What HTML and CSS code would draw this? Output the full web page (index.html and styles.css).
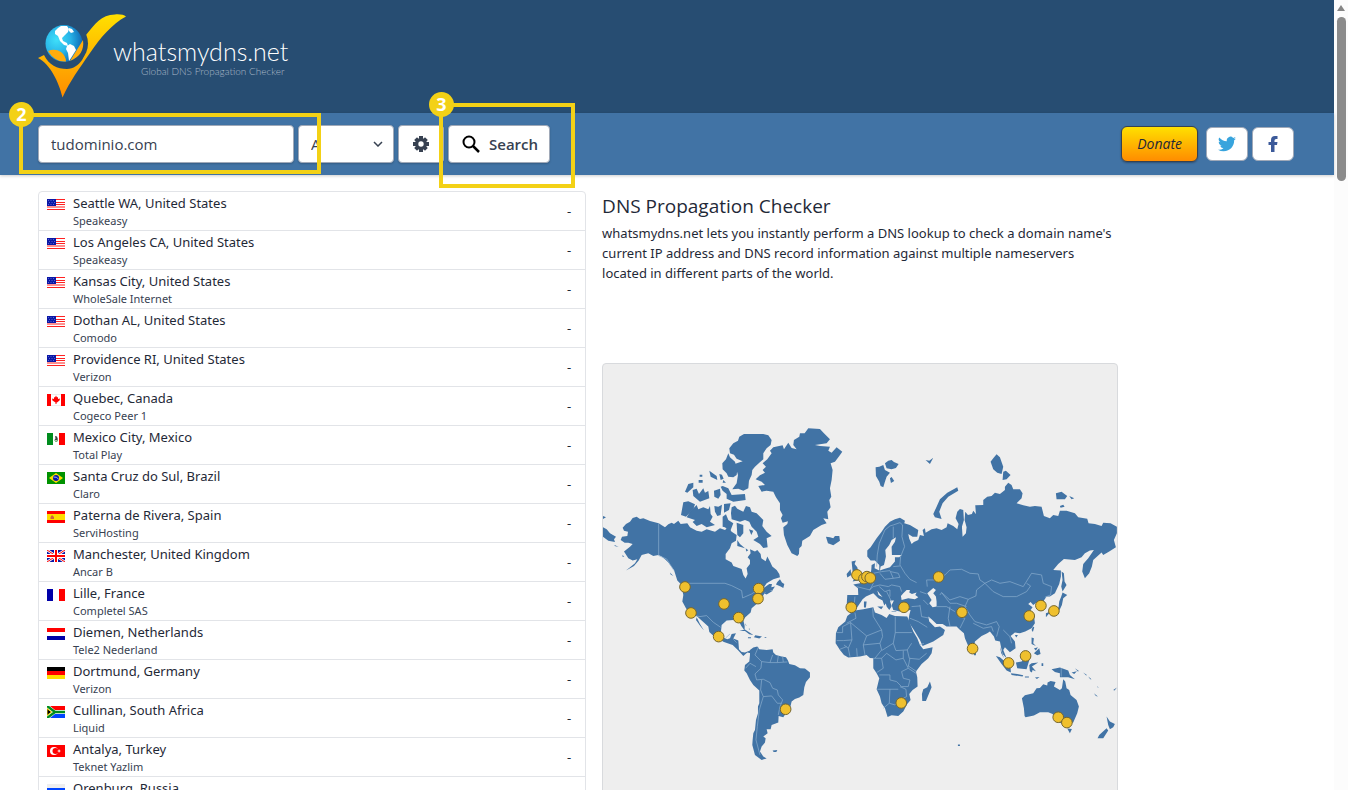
FILE: index.html
```html
<!DOCTYPE html>
<html lang="en">
<head>
    <meta charset="UTF-8">
    <meta name="viewport" content="width=device-width, initial-scale=1.0">
    <title>DNS Propagation Checker - whatsmydns.net</title>
    <link rel="stylesheet" href="styles.css">
</head>
<body>
    <!-- Flags -->
    <svg class="sprite" aria-hidden="true">
        <symbol id="us" viewBox="0 0 18 12">
            <path fill="#fff" d="M0 0h18v12H0z"/>
            <path stroke="#f22" d="M0 .5h18M0 3.5h18M0 5.5h18M0 8h18M0 10.5h18"/>
            <path fill="#0a17a7" d="M0 0h9v7H0z"/>
            <path stroke="#5562cc" stroke-dasharray="1 1.5" d="M1 1.5h7M2 3.5h6M1 5.5h7"/>
        </symbol>
        <symbol id="ca" viewBox="0 0 18 12">
            <path fill="#eee" d="M0 0h18v12H0z"/><path fill="#fff" d="M4 1h10v10H4z"/>
            <path fill="#f00" d="M0 0h4v12H0zM14 0h4v12h-4zM9 1.500l1 2 1-.5v2l2-.5-.5 2L10 8.500H9.500V10h-1V8.500L5.500 6.500 5 4.500l2 .5V3l1 .5z"/>
        </symbol>
        <symbol id="mx" viewBox="0 0 18 12">
            <path fill="#fff" d="M0 0h18v12H0z"/><path fill="#008c1e" d="M0 0h6v12H0z"/><path fill="#f00" d="M12 0h6v12h-6z"/>
            <path fill="#444" d="M8 3l2 .5 1 3-2 1-1.500-1 1-1z"/><path stroke="#4c9a4c" d="M7.500 7.500l1.500 1 2-1" fill="none"/>
        </symbol>
        <symbol id="br" viewBox="0 0 18 12">
            <path fill="#009200" d="M0 0h18v12H0z"/><path fill="#fd0" d="M9 1l7 5-7 5-7-5z"/>
            <circle cx="9" cy="6" r="3" fill="#0a17a7"/><path stroke="#9fb4ff" fill="none" d="M6.500 5q3-.5 5 2"/>
        </symbol>
        <symbol id="es" viewBox="0 0 18 12">
            <path fill="#f00" d="M0 0h18v12H0z"/><path fill="#fd0" d="M0 3h18v6H0z"/>
            <path fill="#d06040" d="M3.500 8V6l1.500-2 2 2v2z"/>
        </symbol>
        <symbol id="gb" viewBox="0 0 18 12">
            <path fill="#0a17a7" d="M0 0h18v12H0z"/>
            <path stroke="#fff" stroke-width="2.500" d="M0 0l18 12M18 0L0 12"/>
            <path stroke="#f00" d="M0 0l18 12M18 0L0 12"/>
            <path stroke="#fff" stroke-width="4" d="M9 0v12M0 6h18"/>
            <path stroke="#f00" stroke-width="2" d="M9 0v12M0 6h18"/>
        </symbol>
        <symbol id="fr" viewBox="0 0 18 12">
            <path fill="#fff" d="M0 0h18v12H0z"/><path fill="#0000a8" d="M0 0h6v12H0z"/><path fill="#f00" d="M12 0h6v12h-6z"/>
        </symbol>
        <symbol id="nl" viewBox="0 0 18 12">
            <path fill="#fff" d="M0 0h18v12H0z"/><path fill="#f00" d="M0 0h18v4H0z"/><path fill="#0000a8" d="M0 8h18v4H0z"/>
        </symbol>
        <symbol id="de" viewBox="0 0 18 12">
            <path d="M0 0h18v4H0z"/><path fill="#f00" d="M0 4h18v4H0z"/><path fill="#fd0" d="M0 8h18v4H0z"/>
        </symbol>
        <symbol id="za" viewBox="0 0 18 12">
            <path fill="#fff" d="M0 0h18v12H0z"/><path fill="#f00" d="M3 0h15v4H8z"/><path fill="#04f" d="M3 12h15V8H8z"/>
            <path stroke="#008c1e" stroke-width="2.500" fill="none" d="M0 0l8 6-8 6M8 6h10"/>
            <path stroke="#fd0" fill="#000" d="M0 2.500L4.500 6 0 9.500z"/>
        </symbol>
        <symbol id="tr" viewBox="0 0 18 12">
            <path fill="#f00" d="M0 0h18v12H0z"/><circle cx="7" cy="6" r="4" fill="#fff"/><circle cx="8.500" cy="6" r="3" fill="#f00"/>
            <path fill="#fff" d="M10 6l1.500-.5.5-1.500.7 1.500 1.300.5-1.300.5-.7 1.500-.5-1.500z"/>
        </symbol>
        <symbol id="ru" viewBox="0 0 18 12">
            <path fill="#eee" d="M0 0h18v4H0z"/><path fill="#04f" d="M0 4h18v4H0z"/><path fill="#f00" d="M0 8h18v4H0z"/>
        </symbol>
    </svg>

    <div class="window">
        <div class="page">
            <header class="header">
                <a class="logo" href="#">
                    <svg class="logo-mark" viewBox="38 14 90 84" aria-hidden="true">
                        <defs>
                            <linearGradient id="gold" x1="0" y1="0" x2="0" y2="1">
                                <stop offset="0" stop-color="#ffe000"/>
                                <stop offset="1" stop-color="#ff8c00"/>
                            </linearGradient>
                            <radialGradient id="sea" cx=".3" cy=".4" r=".75">
                                <stop offset="0" stop-color="#3fe0fa"/>
                                <stop offset=".5" stop-color="#28b4e8"/>
                                <stop offset="1" stop-color="#0b5fae"/>
                            </radialGradient>
                        </defs>
                        <path fill="url(#gold)" d="M38 58L44 55C49 65 57 69 67 69C80 68 88 57 86 35C95 24 101 15 115 14.500C120 14 124 15 126 16.500C112 24 100 38 90 53C79 69 70 81 62.500 97.500C59 82 50 64 38 58z"/>
                        <circle cx="65" cy="43.500" r="23" fill="#274d72"/>
                        <circle cx="64" cy="43.500" r="18.500" fill="url(#sea)"/>
                        <path fill="#fff" d="M55 31l3-3 3-2 6 0 2 3-1 3-3 3-3 3 1 3 4 2 1 3-4-1-4-4-2-5-3-2zM69 28l3 1 2 3-3 1-2-2zM67 46l3-2 4 2 2 4-5 8-2 3-1-8-2-4z"/>
                        <path fill="#ffac0c" d="M48 51q7-3 13 1 5 4 5 9.500-11 1-18-10.500zM83 40q2 15-13 21z"/>
                    </svg>
                    <span class="logo-text">
                        <span class="logo-name">whatsmydns.net</span>
                        <span class="logo-tagline">Global DNS Propagation Checker</span>
                    </span>
                </a>
            </header>

            <nav class="toolbar">
                <form class="search">
                    <input type="text" class="field domain" aria-label="Domain name" value="tudominio.com">
                    <select class="field record" aria-label="Record type">
                        <option>A</option>
                        <option>MX</option>
                    </select>
                    <button type="button" class="field gear" aria-label="Settings">
                        <svg width="16" height="16" viewBox="0 0 16 16">
                            <g stroke="currentColor" stroke-width="4"><path d="M8 0v16M0 8h16M2.600 2.600l10.800 10.800M13.400 2.600L2.600 13.400"/></g>
                            <circle cx="8" cy="8" r="6" fill="currentColor"/><circle cx="8" cy="8" r="2.700" fill="#fff"/>
                        </svg>
                    </button>
                    <button type="submit" class="field submit">
                        <svg width="18" height="18" viewBox="0 0 18 18" fill="none" stroke="#000">
                            <circle cx="7" cy="7" r="5.500" stroke-width="2"/><path stroke-width="2.500" d="M11 11l6 6"/>
                        </svg>
                        Search
                    </button>
                </form>
                <div class="links">
                    <a class="donate" href="#">Donate</a>
                    <a class="social twitter" href="#" aria-label="Twitter">
                        <svg width="18" height="18" viewBox="0 0 24 24" fill="currentColor"><path d="M24 4.600a10 10 0 0 1-2.800.8 5 5 0 0 0 2.100-2.700 10 10 0 0 1-3.100 1.200 4.900 4.900 0 0 0-8.400 4.500A14 14 0 0 1 1.700 3.200a4.900 4.900 0 0 0 1.500 6.500 4.900 4.900 0 0 1-2.200-.6 4.900 4.900 0 0 0 3.900 4.900 5 5 0 0 1-2.200.1 4.900 4.900 0 0 0 4.600 3.400A9.900 9.900 0 0 1 0 19.500a14 14 0 0 0 7.500 2.200c9.100 0 14.300-7.700 14-14.600a10 10 0 0 0 2.500-2.500z"/></svg>
                    </a>
                    <a class="social facebook" href="#" aria-label="Facebook">
                        <svg width="18" height="18" viewBox="0 0 18 18" fill="currentColor"><path d="M7 17v-7H4.500V7H7V5q0-4 4-4h2.500v3H12q-1.500 0-1.500 1.500V7h3L13 10h-2.500v7z"/></svg>
                    </a>
                </div>
            </nav>

            <main class="content">
                <div class="results">
                    <table>
                        <tr><td class="flag"><svg><use href="#us"/></svg></td><td>Seattle WA, United States<small>Speakeasy</small></td><td class="result">-</td></tr>
                        <tr><td class="flag"><svg><use href="#us"/></svg></td><td>Los Angeles CA, United States<small>Speakeasy</small></td><td class="result">-</td></tr>
                        <tr><td class="flag"><svg><use href="#us"/></svg></td><td>Kansas City, United States<small>WholeSale Internet</small></td><td class="result">-</td></tr>
                        <tr><td class="flag"><svg><use href="#us"/></svg></td><td>Dothan AL, United States<small>Comodo</small></td><td class="result">-</td></tr>
                        <tr><td class="flag"><svg><use href="#us"/></svg></td><td>Providence RI, United States<small>Verizon</small></td><td class="result">-</td></tr>
                        <tr><td class="flag"><svg><use href="#ca"/></svg></td><td>Quebec, Canada<small>Cogeco Peer 1</small></td><td class="result">-</td></tr>
                        <tr><td class="flag"><svg><use href="#mx"/></svg></td><td>Mexico City, Mexico<small>Total Play</small></td><td class="result">-</td></tr>
                        <tr><td class="flag"><svg><use href="#br"/></svg></td><td>Santa Cruz do Sul, Brazil<small>Claro</small></td><td class="result">-</td></tr>
                        <tr><td class="flag"><svg><use href="#es"/></svg></td><td>Paterna de Rivera, Spain<small>ServiHosting</small></td><td class="result">-</td></tr>
                        <tr><td class="flag"><svg><use href="#gb"/></svg></td><td>Manchester, United Kingdom<small>Ancar B</small></td><td class="result">-</td></tr>
                        <tr><td class="flag"><svg><use href="#fr"/></svg></td><td>Lille, France<small>Completel SAS</small></td><td class="result">-</td></tr>
                        <tr><td class="flag"><svg><use href="#nl"/></svg></td><td>Diemen, Netherlands<small>Tele2 Nederland</small></td><td class="result">-</td></tr>
                        <tr><td class="flag"><svg><use href="#de"/></svg></td><td>Dortmund, Germany<small>Verizon</small></td><td class="result">-</td></tr>
                        <tr><td class="flag"><svg><use href="#za"/></svg></td><td>Cullinan, South Africa<small>Liquid</small></td><td class="result">-</td></tr>
                        <tr><td class="flag"><svg><use href="#tr"/></svg></td><td>Antalya, Turkey<small>Teknet Yazlim</small></td><td class="result">-</td></tr>
                        <tr><td class="flag"><svg><use href="#ru"/></svg></td><td>Orenburg, Russia<small>&nbsp;</small></td><td class="result"></td></tr>
                    </table>
                </div>

                <section class="info">
                    <h1>DNS Propagation Checker</h1>
                    <p>whatsmydns.net lets you instantly perform a DNS lookup to check a domain name's current IP address and DNS record information against multiple nameservers located in different parts of the world.</p>
                    <div class="map">
                        <svg viewBox="9 0 1542 1440" role="img" aria-label="World map of nameservers">
                            <!-- North America -->
                            <g class="land" transform="translate(0 168)">
                                <path d="M68 323L78 312 90 305 98 294 110 290 120 297 130 295 150 303 176 310 195 322 205 313 215 308 222 312 235 302 242 312 262 310 270 322 290 332 305 335 320 328 345 335 360 325 375 330 385 322 395 335 410 345 408 362 395 370 390 385 377 402 377 418 395 428 400 438 425 447 430 465 437 476 443 462 440 445 450 432 450 420 443 412 452 400 450 388 465 395 472 390 482 402 484 415 497 424 502 410 510 425 517 440 530 450 538 462 540 472 520 478 500 490 490 505 508 492 516 492 514 502 525 500 518 510 495 518 488 530 478 540 470 552 455 565 452 578 436 592 430 600 434 618 434 632 424 618 418 606 400 600 380 602 365 615 363 635 368 652 382 658 390 655 395 642 408 640 400 656 415 662 417 688 425 696 435 698 450 692 452 700 442 698 430 708 415 692 398 675 372 666 345 652 328 636 325 620 305 602 290 588 272 586 258 565 247 545 250 525 247 510 245 495 232 482 222 450 205 428 195 418 185 410 175 405 160 408 145 400 125 405 116 422 102 438 78 452 105 430 112 418 98 422 85 415 72 395 90 380 98 372 85 368 74 368 62 360 66 350 82 348 84 335 72 332z"/>
                                <path d="M290 592L300 612 312 632 302 620 288 600zM9 322L20 328 30 340 48 350 42 358 45 366 25 362 9 350zM9 288L18 292 9 297zM44 375l12 6-12-3zM68 405l5 6-6-1zM210 458l10 10-8-4z"/>
                                <!-- Arctic islands -->
                                <path d="M388 85L400 70 414 62 418 50 432 42 455 42 490 42 505 46 515 60 512 75 500 85 490 100 490 118 478 128 465 140 457 150 455 165 447 182 445 205 430 212 415 206 397 208 410 190 414 165 408 145 404 132 428 124 410 116 402 104 390 100z"/>
                                <path d="M385 100L390 112 405 125 412 150 410 165 400 172 385 170 380 160 368 148 367 130 378 118z"/>
                                <path d="M395 262L405 257 412 266 430 275 438 258 450 262 455 275 470 280 490 300 487 318 500 335 515 348 500 355 503 382 490 384 480 372 460 360 475 350 470 335 455 320 448 305 435 300 420 305 395 298 393 280z"/>
                                <path d="M260 292L270 275 290 255 295 268 310 262 325 268 330 258 332 282 338 290 330 305 345 315 320 322 305 312 290 318 278 306 285 300z"/>
                                <path d="M243 285L250 247 265 244 285 253 280 268 258 290zM255 215L265 192 280 188 280 202 262 218zM278 210L290 206 297 222 310 205 315 218 325 213 328 235 300 245 280 228zM328 152L350 168 352 180 332 170zM342 212L360 206 362 225 355 236 343 230zM362 200L368 198 385 205 395 225 435 222 437 240 400 245 380 236 380 222 368 212zM343 258L355 260 366 254 362 285 352 288 345 275zM372 252L392 250 387 270 372 278zM368 290L378 283 385 300 400 310 390 335 375 322 368 320zM410 308L430 315 430 340 420 352 412 345zM412 360L420 372 435 385 412 378zM447 328L460 332 454 345zM296 180h12v8h-12zM299 164h8v6h-8zM358 162l8 2 5 12-9 4zM370 180l8 8h-10zM437 385l8 6-6 4zM528 494L532 486 540 478 546 488 553 492 550 504 542 500zM492 520L505 512 520 512 500 524z"/>
                                <!-- Greenland and Iceland -->
                                <path d="M467 178L480 166 495 158 488 150 498 140 488 130 502 118 515 100 510 92 520 82 548 76 552 88 565 68 575 84 590 88 580 75 582 60 598 50 600 40 614 40 625 25 660 27 672 40 690 58 680 70 645 75 660 78 690 80 685 92 695 98 710 82 727 95 718 108 705 125 692 130 698 150 695 180 690 205 694 230 688 240 692 262 682 275 685 298 670 295 680 310 665 315 640 330 630 348 607 362 605 378 598 385 597 402 592 408 575 400 562 375 552 345 550 322 562 312 564 304 548 308 543 295 548 285 540 270 540 250 528 232 520 215 500 212 485 215 475 198 495 195 485 185z"/>
                                <path d="M678 350L690 352 700 355 705 348 718 348 720 362 700 376 684 370z"/>
                            </g>
                            <!-- Caribbean -->
                            <path class="land" transform="translate(210 588)" d="M208 213L225 209 250 225 238 223 225 213zM256 226L276 230 268 236 252 232zM234 232h9v3h-9zM284 232h5v2h-5zM226 190l4 8-3-2zM238 205l2 5-4-3z"/>
                            <!-- South America -->
                            <g class="land" transform="translate(300 708)">
                                <path d="M150 150L160 143 172 140 178 148 200 150 218 148 220 158 228 165 245 170 258 172 264 182 268 192 285 196 300 205 315 206 330 218 330 232 318 246 313 262 310 285 298 293 285 297 275 305 270 325 258 340 250 352 236 348 235 368 215 375 212 388 200 388 203 400 190 410 197 415 195 428 185 440 180 455 190 470 200 476 185 480 165 465 157 435 158 420 160 400 165 390 168 360 174 340 174 320 178 310 178 272 160 255 150 240 140 220 133 212 135 195 148 185 150 165z"/>
                                <path d="M218 452l14-2-3 6h-8z"/>
                            </g>
                            <!-- Eurasia -->
                            <g transform="translate(720 228)">
                                <path class="land" d="M82 332L92 322 100 310 110 295 125 275 135 260 150 245 165 238 180 233 195 242 193 250 210 255 235 270 232 290 218 290 205 282 208 296 215 312 222 306 235 300 240 285 252 288 248 270 255 265 257 278 275 268 290 265 305 270 320 262 323 250 340 258 352 268 356 252 347 235 352 215 360 207 370 210 372 240 366 260 368 290 378 280 380 262 374 240 376 215 384 225 396 222 400 212 408 222 406 196 430 195 430 180 442 170 455 168 465 158 480 162 495 150 495 140 505 128 515 135 520 148 540 148 548 160 545 175 530 190 550 196 570 200 585 198 605 200 612 228 630 235 640 225 655 228 660 212 680 212 705 220 715 232 742 236 746 250 765 252 785 258 790 248 812 250 831 260 831 280 822 300 828 322 808 335 790 345 785 338 760 360 756 380 748 400 735 415 727 395 730 372 745 355 762 330 750 332 735 340 725 352 705 360 672 357 655 372 640 390 663 392 663 410 658 432 645 460 630 470 620 470 612 482 618 498 612 510 600 508 600 490 590 488 580 495 572 486 565 492 578 502 572 510 582 525 585 550 575 565 556 575 540 580 525 578 512 588 525 605 527 625 510 637 495 622 490 630 496 645 500 655 488 642 484 625 480 605 466 602 462 590 450 575 442 580 425 588 405 605 402 625 396 634 385 618 375 595 372 580 358 568 350 560 320 560 308 552 290 552 275 538 265 530 268 545 285 562 300 560 315 570 310 585 280 605 248 618 240 600 222 570 205 545 208 525 212 510 195 512 180 515 160 510 155 495 162 482 150 482 155 500 148 510 140 500 135 480 120 462 112 452 116 465 140 478 142 485 133 497 128 482 115 475 100 460 88 465 78 470 68 478 60 490 50 505 38 510 25 512 20 500 22 465 55 465 54 445 40 434 60 430 70 420 90 405 94 390 95 375 105 370 104 385 118 392 118 375 105 362 92 362 82 350z"/>
                                <path class="water" d="M155 300L168 292 165 305 155 320 156 345 185 345 178 352 165 352 165 365 150 382 130 388 120 392 122 380 132 375 138 350 136 330 148 315zM185 480L183 468 190 460 200 450 210 450 208 458 216 462 230 458 226 465 235 472 225 478 205 475zM262 460L280 444 288 450 280 460 288 470 290 485 290 500 278 502 268 490 275 480z"/>
                                <path class="land" d="M35 365L48 362 44 372 52 382 55 395 66 410 60 420 38 425 46 412 38 395zM20 402L32 388 34 405 22 413zM72 485h8l-2 18h-6zM112 500h18l-6 8zM155 513h14v2h-14zM107 82L118 80 130 75 135 90 150 98 140 110 135 125 130 142 122 138 118 125 108 108zM135 70L145 62 155 60 162 66 176 72 168 84 155 88 140 85zM150 115l5-4 8 12-10 6zM257 60L268 62 280 53 270 72zM280 222L290 200 300 178 322 158 352 142 355 152 325 170 308 190 298 215 305 237 285 232zM452 65L460 55 470 43 480 52 490 80 485 102 472 98 460 88zM490 95L498 92 512 105 500 118 488 120zM648 160L665 155 682 168 675 178 650 178zM688 168L703 175 695 178zM660 198l10-4 4 6-12 3zM665 395L672 400 674 425 680 435 668 455 664 440 668 420z"/>
                                <path class="border" d="M110 380L112 345 118 310 135 270 150 258 160 255 180 248 188 255 186 290 194 320 182 350 180 375 195 400 210 418 230 428M160 295L160 260M100 400L125 395 150 392 160 415 135 418 120 400M160 380L180 378M152 395L175 400 180 412 160 415M88 450L100 440 120 435 145 440 155 435 180 440 185 455M118 440L135 455 150 450 150 470M140 455L155 485M50 440L90 450 100 430 90 420M262 440L260 420 290 420 315 405 330 390 365 388 390 400 415 402 420 420 435 430 455 420 480 430 510 425 550 440 575 400 605 405 610 430 635 440 632 465 615 472M435 430L410 450 408 468 385 478 360 470 330 480 305 458 300 465M435 430L460 455 490 470 530 470 560 455 572 438 560 430M240 455L260 462M250 480L265 495M290 500L320 500 345 515M305 458L330 490 350 490 380 500M330 500L325 535 330 558M385 478L375 500 390 525 405 545 440 555 470 545 478 560M355 530L375 535 360 565M400 550L430 565 455 560 460 575M478 560L470 590M490 570L510 590 515 610M240 495L245 530 270 535M210 535L235 545 262 562M215 500L240 498M45 470L42 505"/>
                            </g>
                            <!-- Africa -->
                            <g transform="translate(660 678)">
                                <path class="land" d="M82 78L95 68 105 62 130 58 160 52 165 68 185 75 200 84 208 72 225 78 262 80 268 95 280 125 292 145 300 165 310 178 338 172 335 190 325 205 305 222 288 245 292 262 293 290 278 300 268 312 272 330 262 342 250 365 235 378 215 376 203 381 195 355 185 340 180 320 170 298 178 265 170 250 160 235 160 205 150 204 140 195 120 200 85 203 72 195 60 180 47 160 48 130 55 112 76 95zM330 275L335 292 318 333 307 333 306 312 310 298 322 292zM414 464h6v4h-6z"/>
                                <path class="border" d="M105 68L108 85 80 100M50 128L68 128 68 110 92 98 140 138 185 120 160 80 158 55M92 98L96 150 70 152 50 152M96 150L85 175 72 165M140 138L130 165 180 160M185 120L188 140 180 160 185 180 165 205M226 80L226 128 276 128M226 128L220 160 185 182M220 160L228 182 262 180 275 160M130 165L135 195M110 175L112 200M85 175L90 200M60 178L80 170M160 205L185 205 200 190 228 210 250 205 250 182M185 205L190 235 170 248M250 205L265 235 245 245 250 265 270 270 265 290 245 290 230 275 210 270 210 255 178 255M262 180L268 205 298 208 320 190M265 235L288 250M270 205L265 230M172 298L210 298 235 298M210 298L208 340 225 345 240 330 260 320 258 298 240 290M208 340L190 355M290 245L265 228M300 165L312 160"/>
                            </g>
                            <!-- Southeast Asia and Oceania -->
                            <g class="land" transform="translate(1080 678)">
                                <path d="M186 325L195 316 220 310 230 295 240 294 250 283 262 287 263 278 272 273 287 276 282 290 300 300 306 295 310 268 316 275 320 295 328 300 332 315 350 330 357 350 352 370 340 398 322 408 310 402 298 398 285 382 278 372 265 367 240 367 222 377 197 382 194 378 192 355zM322 416L336 417 330 430zM440 380L450 395 465 402 460 412 450 418 445 405zM440 415L445 422 430 445 413 445 418 435z"/>
                                <path d="M258 230L275 238 300 233 325 242 330 255 345 268 325 262 300 262 300 250 285 246 275 238zM168 218L185 215 205 195 212 198 200 238 172 235zM108 198L120 202 135 215 152 235 153 248 140 242 125 222zM153 250L172 252 190 256 188 260 155 255zM195 260h12v3h-12zM225 263l14-2-8 6zM208 225L215 220 235 218 216 230 228 244 218 240 216 248 210 244zM215 143L222 145 220 160 228 168 215 162zM222 190L238 175 242 192 232 196zM222 176l12-4-6 10zM215 120l4-10 4 2-4 14zM165 135h9l-5 8zM308 8L322 15 310 25 306 45 300 58 285 75 268 70 258 82 258 70 280 62 296 52 298 35 304 20zM42 184h6v12h-6zM120 170L132 205 124 190zM245 220h5v8h-5zM345 235l12 8-3 2zM335 248l16-4-8 8zM370 248l12 8-4 0zM385 260l10 8-4 0zM402 310l12 10-6-2zM460 300l12-8-8 10zM413 288l3 6-3-2z"/>
                            </g>
                            <path class="border" d="M176 478V575L200 585 222 620M250 658H375L395 665 425 680 428 702 455 690 470 680M272 753L300 758 320 755 340 775 362 790M377 822L390 810M410 836L400 826M1384 912V938"/>
                            <path class="border" transform="translate(300 708)" d="M175 142L165 165 185 185 183 205 165 222 170 240 190 238 210 248 218 265 232 270 235 285 248 300 240 320 235 345M185 240L182 270 190 290 215 288 232 310 245 310M190 290L178 330 172 380 168 420 180 465M185 185L210 188 218 165M235 168L232 188M248 170L250 186M137 205L150 190 168 200M210 188L232 188 262 186"/>
                            <g class="pins">
                                <circle cx="255" cy="669" r="16"/><circle cx="273" cy="747" r="16"/><circle cx="372" cy="720" r="16"/>
                                <circle cx="476" cy="674" r="16"/><circle cx="474" cy="704" r="16"/><circle cx="416" cy="761" r="16"/>
                                <circle cx="356" cy="818" r="16"/><circle cx="557" cy="1036" r="16"/><circle cx="754" cy="730" r="16"/>
                                <circle cx="771" cy="633" r="16"/><circle cx="792" cy="644" r="16"/><circle cx="801" cy="638" r="16"/>
                                <circle cx="811" cy="642" r="16"/><circle cx="912" cy="730" r="16"/><circle cx="1016" cy="639" r="16"/>
                                <circle cx="1086" cy="745" r="16"/><circle cx="1323" cy="725" r="16"/><circle cx="1362" cy="741" r="16"/>
                                <circle cx="1288" cy="756" r="16"/><circle cx="1118" cy="854" r="16"/><circle cx="1277" cy="876" r="16"/>
                                <circle cx="1226" cy="897" r="16"/><circle cx="904" cy="1017" r="16"/><circle cx="1375" cy="1060" r="16"/>
                                <circle cx="1401" cy="1076" r="16"/>
                            </g>
                        </svg>
                    </div>
                </section>
            </main>

            <!-- Tutorial callouts -->
            <div class="callout step-2"><span>2</span></div>
            <div class="callout step-3"><span>3</span></div>
        </div>

        <div class="scrollbar">
            <svg width="8" height="6" viewBox="0 0 8 6"><path fill="#858585" d="M4 0l4 6H0z"/></svg>
            <div class="thumb"></div>
        </div>
    </div>
</body>
</html>
```
FILE: styles.css
```css
:root {
    --navy: #274d72;
    --blue: #4173a5;
    --yellow: #f3d116;
    --line: #e2e4e8;
    --text: #1f2937;
}

* {
    margin: 0;
    padding: 0;
    box-sizing: border-box;
}

body {
    background: #fff;
    color: var(--text);
    font-family: "Noto Sans", "Open Sans", sans-serif;
    font-size: 13px;
    line-height: 20px;
}

a {
    color: inherit;
    text-decoration: none;
}

.sprite {
    position: absolute;
    width: 0;
    height: 0;
}

.window {
    display: flex;
    height: 100vh;
    overflow: hidden;
}

.page {
    position: relative;
    flex: 1;
    min-width: 0;
}

.header {
    background: var(--navy);
    padding: 14px 40px 15px 38px;
}

.logo {
    display: inline-flex;
    align-items: flex-start;
    color: #fff;
    vertical-align: top;
}

.logo-mark {
    width: 90px;
    height: 84px;
}

.logo-text {
    display: flex;
    flex-direction: column;
    align-items: flex-end;
    margin-left: -15px;
    padding-top: 22px;
    font-family: Lato, sans-serif;
    font-weight: 300;
}

.logo-name {
    font-size: 25px;
    line-height: 30px;
}

.logo-tagline {
    padding-right: 4px;
    font-size: 10px;
    line-height: 10px;
    color: #a9b8c7;
}

.toolbar {
    display: flex;
    justify-content: space-between;
    align-items: center;
    padding: 12px 40px 12px 38px;
    background: var(--blue);
    box-shadow: 0 1px 3px rgba(0, 0, 0, 0.2);
    font-family: "Open Sans", sans-serif;
}

.search,
.links {
    display: flex;
    align-items: center;
    gap: 4px;
}

.field {
    height: 38px;
    border: 1px solid #a0a9b8;
    border-radius: 4px;
    background: #fff;
    box-shadow: 0 1px 2px rgba(0, 0, 0, 0.2);
    color: #374151;
    font-family: inherit;
    font-size: 15px;
}

.domain {
    width: 256px;
    padding: 0 12px;
}

.record {
    width: 96px;
    padding: 0 12px;
    appearance: none;
    background: #fff url("data:image/svg+xml,%3Csvg xmlns='http://www.w3.org/2000/svg' width='10' height='6' fill='none' stroke='%23374151' stroke-width='1.5'%3E%3Cpath d='M1 1l4 4 4-4'/%3E%3C/svg%3E") no-repeat right 10px center;
}

.gear {
    display: flex;
    align-items: center;
    justify-content: center;
    width: 46px;
}

.submit {
    display: flex;
    align-items: center;
    gap: 9px;
    padding: 0 11px 0 13px;
    font-weight: 600;
}

.donate {
    margin-right: 4px;
    padding: 7px 15px;
    border: 1px solid #374151;
    border-radius: 6px;
    background: linear-gradient(#ffe000, #ff8c00);
    box-shadow: 0 1px 2px rgba(0, 0, 0, 0.3);
    font-size: 14px;
    font-style: italic;
}

.social {
    display: flex;
    align-items: center;
    justify-content: center;
    width: 42px;
    height: 34px;
    border: 1px solid #a0a9b8;
    border-radius: 6px;
    background: #fff;
}

.twitter {
    color: #38a4dd;
}

.facebook {
    color: #3c5a9a;
}

.content {
    display: grid;
    grid-template-columns: 17fr 16fr 160px;
    align-items: start;
    gap: 16px;
    padding: 16px 40px 16px 38px;
}

.results {
    border: 1px solid var(--line);
    border-radius: 4px;
}

.results table {
    width: 100%;
    border-spacing: 0;
}

.results td {
    height: 39px;
    padding: 1px 0;
    border-bottom: 1px solid var(--line);
    vertical-align: top;
}

.results .flag {
    width: 34px;
    padding: 7px 8px 0;
}

.flag svg {
    display: block;
    width: 18px;
    height: 12px;
}

.results small {
    display: block;
    font-size: 11px;
    line-height: 16px;
    color: #374151;
}

.results .result {
    width: 32px;
    padding-right: 14px;
    text-align: right;
    vertical-align: middle;
}

.info h1 {
    margin: 3px 0 5px;
    font-family: "Open Sans", sans-serif;
    font-size: 19px;
    font-weight: 400;
    line-height: 24px;
}

.map {
    margin-top: 80px;
    border: 1px solid #d8dadd;
    border-radius: 4px;
    background: #eee;
}

.map svg {
    display: block;
    width: 100%;
}

.land {
    fill: #4173a5;
}

.water {
    fill: #eee;
}

.border {
    fill: none;
    stroke: #8eb0d0;
    stroke-width: 2;
}

.pins {
    fill: #efc02e;
    stroke: #75652d;
    stroke-width: 3;
}

.callout {
    position: absolute;
    border: 4px solid var(--yellow);
}

.callout span {
    position: absolute;
    top: -15px;
    left: -14px;
    width: 25px;
    height: 25px;
    border-radius: 50%;
    background: var(--yellow);
    color: #fff;
    font-size: 18px;
    font-weight: 700;
    line-height: 24px;
    text-align: center;
}

.step-2 {
    top: 113px;
    left: 19px;
    width: 302px;
    height: 61px;
}

.step-3 {
    top: 103px;
    left: 439px;
    width: 136px;
    height: 85px;
}

.scrollbar {
    display: flex;
    flex-direction: column;
    align-items: center;
    gap: 6px;
    width: 14px;
    padding-top: 5px;
    background: #fcfcfc;
}

.thumb {
    width: 9px;
    height: 164px;
    border-radius: 5px;
    background: #8b8b8b;
}
```
